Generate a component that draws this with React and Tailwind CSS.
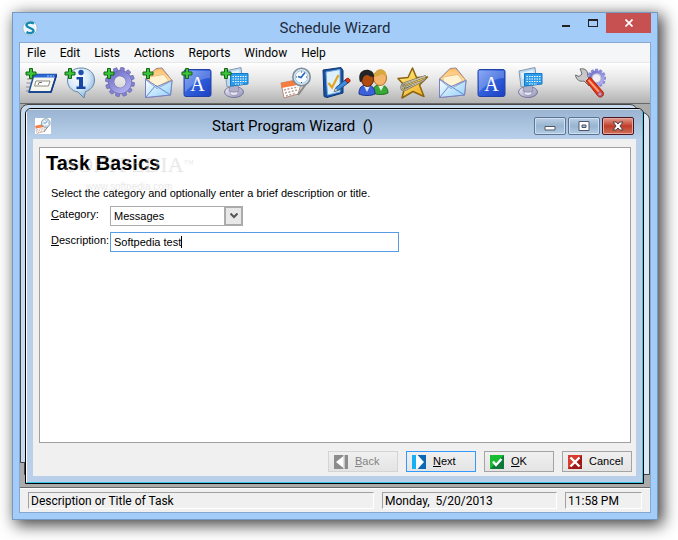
import { useState } from 'react';

const menus = ['File', 'Edit', 'Lists', 'Actions', 'Reports', 'Window', 'Help'];

// Gradients used by several of the toolbar drawings
function SharedGradients() {
  return (
    <svg className="absolute h-0 w-0" aria-hidden="true">
      <defs>
        <linearGradient id="blueTile" x1="0" y1="0" x2="1" y2="1">
          <stop offset="0" stopColor="#6f94f2" />
          <stop offset="0.5" stopColor="#2f5fdc" />
          <stop offset="1" stopColor="#1c3fc0" />
        </linearGradient>
        <linearGradient id="paper" x1="0" y1="0" x2="1" y2="1">
          <stop offset="0" stopColor="#ffffff" />
          <stop offset="1" stopColor="#8fd0fa" />
        </linearGradient>
        <linearGradient id="flap" x1="0" y1="0" x2="0" y2="1">
          <stop offset="0" stopColor="#ffc06a" />
          <stop offset="1" stopColor="#fff0cf" />
        </linearGradient>
        <linearGradient id="gear" x1="0" y1="0" x2="1" y2="1">
          <stop offset="0" stopColor="#6f6fc8" />
          <stop offset="1" stopColor="#b4b4f0" />
        </linearGradient>
        <radialGradient id="bubble" cx="0.4" cy="0.3" r="0.8">
          <stop offset="0" stopColor="#ffffff" />
          <stop offset="0.5" stopColor="#d5e8f8" />
          <stop offset="1" stopColor="#6fa5d4" />
        </radialGradient>
        <linearGradient id="gold" x1="0" y1="0" x2="1" y2="1">
          <stop offset="0" stopColor="#fff08a" />
          <stop offset="1" stopColor="#f0a818" />
        </linearGradient>
        <linearGradient id="steel" x1="0" y1="0" x2="1" y2="1">
          <stop offset="0" stopColor="#f4f4fa" />
          <stop offset="1" stopColor="#8c8cb4" />
        </linearGradient>
      </defs>
    </svg>
  );
}

function Plus() {
  return (
    <path
      d="M4.500 1.500h3v3.500h3.500v3h-3.500v3.500h-3v-3.500H1v-3h3.500z"
      fill="#3cc43c"
      stroke="#146414"
      strokeWidth="1"
    />
  );
}

function Form() {
  return (
    <>
      <path d="M2 12h5M1.500 16h5M1 20h4M1 24h3" stroke="#8a8a8a" />
      <path d="M9 7.500h22.500L26 25H4z" fill="#f6f6ee" stroke="#1c50a0" strokeWidth="1.500" />
      <path d="M9 7.500h22.500l-1 3H8z" fill="#2a66d8" />
      <path d="M22 9h7" stroke="#a8d0ff" strokeDasharray="2 1" />
      <path d="M11 14h14l-1.500 5H9.500z" fill="#fff" stroke="#8c8c80" />
      <path d="M13 18l1-2.500h3" stroke="#777" fill="none" />
      <path d="M4 25h22l5.500-17" stroke="#123c86" strokeWidth="1.500" fill="none" />
    </>
  );
}

function Info() {
  return (
    <>
      <path
        d="M17 1c8 0 13.500 5 13.500 12 0 6-4 10-9 11.500L20 31l-6-6C7 24 3.500 19 3.500 13 3.500 6 9 1 17 1z"
        fill="url(#bubble)"
        stroke="#6488aa"
      />
      <circle cx="17" cy="5.500" r="2.700" fill="#1c50b0" />
      <path d="M12.500 10h6.500v9.500h2.500V22h-9v-2.500H15v-7h-2.500z" fill="#1846a4" />
    </>
  );
}

const teeth = [0, 30, 60, 90, 120, 150, 180, 210, 240, 270, 300, 330];

function Cog() {
  return (
    <g transform="rotate(10 17 15)">
      {teeth.map((a) => (
        <path
          key={a}
          d="M14.500 5l.8-4.500h3.400l.8 4.500z"
          fill="#8484d4"
          stroke="#6464ac"
          strokeWidth="0.700"
          transform={`rotate(${a} 17 15)`}
        />
      ))}
      <circle cx="17" cy="15" r="8.700" fill="none" stroke="#6868b0" strokeWidth="6" />
      <circle cx="17" cy="15" r="8.700" fill="none" stroke="url(#gear)" strokeWidth="5" />
    </g>
  );
}

function Envelope() {
  return (
    <>
      <path d="M3.500 12L14 1.500 20 1l10 12.500L28.500 28 3.500 30.500z" fill="#e6f2fd" stroke="#7c80bc" />
      <path d="M4 12L14 2l5.500-.5L29.500 13 16 20z" fill="url(#flap)" stroke="#d09040" strokeWidth="0.700" />
      <path d="M7 10l15-2.500 4.500 6L16 20l-8.500-5z" fill="#fff3d4" stroke="#e0a458" strokeWidth="0.600" />
      <path d="M3.500 12L15 19.500 30 13.500 28.500 28 3.500 30.500z" fill="url(#paper)" stroke="#7c80bc" />
      <path d="M4 30l9.500-11.500L28.500 28" fill="none" stroke="#6888cc" />
      <path d="M4 13l11 8.500L29.500 14" fill="none" stroke="#88a8dc" />
    </>
  );
}

function Letter() {
  return (
    <>
      <rect x="3" y="2.500" width="27" height="27" rx="2" fill="url(#blueTile)" stroke="#2442a8" />
      <path d="M4 4h25v7C20 11 12 17 4 25z" fill="#fff" opacity="0.22" />
      <text x="16.500" y="24" textAnchor="middle" fontSize="20" fill="#fff" className="font-['Liberation_Serif',serif]">
        A
      </text>
    </>
  );
}

function Keyboard() {
  return (
    <>
      <ellipse cx="14" cy="25" rx="9.500" ry="5.500" fill="url(#steel)" stroke="#77779c" />
      <ellipse cx="14" cy="26" rx="4" ry="2.500" fill="#e8e8f4" stroke="#8c8cac" strokeWidth="0.700" />
      <path d="M10 18h8l1 6c-3 1.500-7 1.500-10 0z" fill="#b0b0c8" stroke="#8080a0" strokeWidth="0.700" />
      <path d="M5 4l16-3.500 2 17L7 20z" fill="#bcdcf2" stroke="#8898ac" />
      <path d="M7 6l12-3 1 4-12 5z" fill="#fff" opacity="0.6" />
      <path d="M10.500 6.500H28V17l-17.500 2z" fill="#2c9cec" stroke="#1878c4" />
      <path
        d="M12.500 9.500h14M12.500 12h14M12.500 14.500h14M15 17h8"
        stroke="#fff"
        strokeWidth="1.100"
        strokeDasharray="1.500 1"
      />
    </>
  );
}

function Schedule() {
  return (
    <>
      <path d="M1 16l16-3 5 1-4 13-14 4z" fill="#fff" stroke="#b48c78" />
      <path d="M1 16l16-3.500 4 1-.8 4L1.500 21z" fill="#f47c3c" />
      <path d="M4 23l14-3M5 26l12-3M6 29l9-2.500" stroke="#b49c94" strokeWidth="1.500" strokeDasharray="2 1.500" />
      <path d="M18 28l8-11" stroke="#888" strokeWidth="2" />
      <circle cx="21.500" cy="10" r="8.700" fill="#dce9f3" stroke="#7d8d99" strokeWidth="1.600" />
      <circle cx="21.500" cy="10" r="6.300" fill="#f6fbff" stroke="#a3c8e2" />
      <path d="M25 5.500l-4 5-3-1" stroke="#2464b4" strokeWidth="1.500" fill="none" />
      <path d="M21.500 4.500v1M21.500 15v1M16 10h1M26 10h1" stroke="#444" />
    </>
  );
}

function Checklist() {
  return (
    <>
      <path d="M4 3l18-2.500 2 3V26L8 30.500l-3-1z" fill="#1850a0" stroke="#0e3878" />
      <path d="M7 5l14-2.500V25L8.500 28z" fill="#dff0fd" stroke="#74a8dc" />
      <path d="M9.500 16l3.500 4.500L19.500 8" stroke="#e4a41c" strokeWidth="2.200" fill="none" />
      <path d="M15 24.500l2-4L26 13l3 3-10 7.500z" fill="#3c8cdc" stroke="#1c5090" />
      <path d="M26 13l2-1.500c2-1 4 2 2.500 3.500L29 16z" fill="#e03818" stroke="#88200c" />
      <path d="M15 24.500l1.500-3 2 1.800z" fill="#f4cc90" />
    </>
  );
}

function People() {
  return (
    <>
      <path d="M15 26c0-6 2-8 7-8s8 3 8 8c-4 2-11 2-15 0z" fill="#38a838" stroke="#1c701c" />
      <path d="M20 18l3 6 3-6z" fill="#e4f4e4" />
      <ellipse cx="22" cy="11" rx="6.500" ry="7.500" fill="#f4b46c" stroke="#ac7028" />
      <path d="M15.500 10c1-10 13-10 13-1-2 0-3-1-4-2-3 2-6 3-9 3z" fill="#d8a840" />
      <path d="M1 27c0-7 3-9 8-9s8 3 8 9c-4 2-12 2-16 0z" fill="#3c60d8" stroke="#1c3890" />
      <path d="M6 19l3 6 3-6z" fill="#dce6fc" />
      <ellipse cx="9.500" cy="12.500" rx="6" ry="7" fill="#b04c10" stroke="#542008" />
      <path d="M2 15C-1 6 5 1.500 11 3c4 1 5.500 4 5 7-3 0-5-1-6-2-3 0-4 1-5 3-.5 2-1 4-3 4z" fill="#242428" />
    </>
  );
}

function Star() {
  return (
    <>
      <path
        d="M15.500 1l4 9.500 11-.5-8 8 4.500 11.500-11-5L5 31l3-12L1 11.500l10-1z"
        fill="url(#gold)"
        stroke="#8c6410"
        strokeWidth="1.500"
        strokeLinejoin="round"
      />
      <path
        d="M29 9L8 16c-5 2-5 8 0 7l17-9c4-2 4-5 0-3.500L9 17c-3 1.500-2 3.500 0 3l13-5"
        fill="none"
        stroke="#746c50"
        strokeWidth="2"
      />
      <path
        d="M29 9L8 16c-5 2-5 8 0 7l17-9c4-2 4-5 0-3.500L9 17c-3 1.500-2 3.500 0 3l13-5"
        fill="none"
        stroke="#d0ccb4"
        strokeWidth="0.900"
      />
    </>
  );
}

function Tools() {
  return (
    <>
      <g transform="translate(11 1) scale(0.68)">
        {teeth.map((a) => (
          <path key={a} d="M14 6l1-5h4l1 5z" fill="#8c8cd8" transform={`rotate(${a} 17 15)`} />
        ))}
        <circle cx="17" cy="15" r="9" fill="none" stroke="url(#gear)" strokeWidth="4" />
        <circle cx="17" cy="15" r="6.500" fill="#f0f0f4" stroke="#9898c4" />
      </g>
      <path
        d="M6 2c4-1 7 1 7.500 4l.5 4 5 5-4 4-5-5c-4 1-8-1-8.500-6l3.500 1.500 3-2.500L7 4z"
        fill="#c8c8cc"
        stroke="#6c6c6c"
      />
      <path d="M12 14l4-4 13 15c2 3-2 7-5 4z" fill="#e83010" stroke="#a42c18" />
      <path d="M14.500 13L26 26" stroke="#ffa07c" strokeWidth="2" />
      <circle cx="26" cy="27" r="2.200" fill="#d890a8" stroke="#a04860" />
    </>
  );
}

const toolGroups = [
  {
    className: 'flex gap-[7px]',
    tools: [
      { label: 'New program', Icon: Form, add: true },
      { label: 'New reminder', Icon: Info, add: true },
      { label: 'New service', Icon: Cog, add: true },
      { label: 'New email', Icon: Envelope, add: true },
      { label: 'New text', Icon: Letter, add: true },
      { label: 'New keystrokes', Icon: Keyboard, add: true },
    ],
  },
  {
    className: 'ml-7 flex gap-[7px]',
    tools: [
      { label: 'Schedule', Icon: Schedule },
      { label: 'Tasks', Icon: Checklist },
      { label: 'Users', Icon: People },
      { label: 'Attachments', Icon: Star },
      { label: 'Emails', Icon: Envelope },
      { label: 'Texts', Icon: Letter },
      { label: 'Keystrokes', Icon: Keyboard },
    ],
  },
  { className: 'ml-7 flex', tools: [{ label: 'Options', Icon: Tools }] },
];

function Toolbar() {
  return (
    <div className="flex border-b border-[#696969] bg-linear-to-b from-white via-[#e2e2e2] to-[#b2b2b2] px-[5px] pt-1 pb-1">
      {toolGroups.map(({ className, tools }, i) => (
        <div key={i} className={className}>
          {tools.map(({ label, Icon, add }) => (
            <button key={label} type="button" aria-label={label} className="size-8">
              <svg viewBox="0 0 32 32" className="size-8">
                <Icon />
                {add && <Plus />}
              </svg>
            </button>
          ))}
        </div>
      ))}
    </div>
  );
}

function TitleBar() {
  return (
    <header className="grid h-[29px] grid-cols-[1fr_auto_1fr] text-[#1e2a3a]">
      <div className="flex items-center pl-[9px]">
        <svg viewBox="0 0 16 16" className="size-4">
          <circle cx="8" cy="8" r="7.200" fill="#eef8fc" stroke="#a4bccb" />
          <path
            d="M12 3.500C8 1.500 4 3 4.500 5.500 5 8 11 8 11.500 10.500c.3 2.500-4 3.500-7 1.500"
            fill="none"
            stroke="#1488b4"
            strokeWidth="2.400"
          />
        </svg>
      </div>
      <h1 className="self-center font-[Roboto,sans-serif] text-[15px] leading-5">Schedule Wizard</h1>
      <div className="flex items-start justify-end pr-[6px]">
        <button type="button" aria-label="Minimize" className="flex h-5 w-7 items-center justify-center">
          <svg viewBox="0 0 12 12" className="size-3">
            <path d="M2 8h8v2H2z" fill="#222" />
          </svg>
        </button>
        <button type="button" aria-label="Maximize" className="flex h-5 w-[26px] items-center justify-center">
          <svg viewBox="0 0 12 12" className="size-3">
            <path d="M1 2h10v8H1zM2 4v5h8V4z" fillRule="evenodd" fill="#222" />
          </svg>
        </button>
        <button type="button" aria-label="Close" className="flex h-5 w-[45px] items-center justify-center bg-[#c75050]">
          <svg viewBox="0 0 8 8" className="size-2">
            <path d="M0.500 0.500l7 7M7.500 0.500l-7 7" stroke="#fff" strokeWidth="1.700" />
          </svg>
        </button>
      </div>
    </header>
  );
}

function FrameButton({ label, danger, children }) {
  return (
    <button
      type="button"
      aria-label={label}
      className={
        danger
          ? 'flex h-[18px] w-8 items-center justify-center rounded-xs border border-[#4c1420] bg-linear-to-b from-[#e09c90] via-[#c03c28] to-[#cc7058] inset-ring inset-ring-[#e4a8a0]'
          : 'flex h-[18px] w-8 items-center justify-center rounded-xs border border-[#5c7494] bg-linear-to-b from-[#bcd0e6] via-[#98b4d0] to-[#b4cce6] inset-ring inset-ring-[#cfdff0]'
      }
    >
      <svg viewBox="0 0 12 10" className="h-[10px] w-3">
        {children}
      </svg>
    </button>
  );
}

function WizardTitle() {
  return (
    <div className="flex h-[29px] items-center bg-linear-to-b from-[#9ab4d2] to-[#b8d0ea] pt-[3px] pr-[8px] pl-[8px]">
      <span className="flex size-4 bg-white">
        <svg viewBox="0 0 32 32" className="size-4">
          <Schedule />
        </svg>
      </span>
      <h2 className="flex-1 text-center font-[Roboto,sans-serif] text-[15px] leading-5 whitespace-pre text-black">
        {'Start Program Wizard  ()'}
      </h2>
      <div className="flex gap-[2px]">
        <FrameButton label="Minimize wizard">
          <path d="M1 5.500h10v3.500H1z" fill="#fff" stroke="#505868" />
        </FrameButton>
        <FrameButton label="Maximize wizard">
          <path d="M1 0.500h10v9H1zM4 4v2.500h4V4z" fillRule="evenodd" fill="#fff" stroke="#505868" />
        </FrameButton>
        <FrameButton label="Close wizard" danger>
          <path
            d="M1 1h3.200L6 3l1.800-2H11L8 5l3 4H7.800L6 7 4.200 9H1l3-4z"
            fill="#fff"
            stroke="#503c44"
          />
        </FrameButton>
      </div>
    </div>
  );
}

// Faint embossed mark lying over the page heading
function Watermark() {
  return (
    <div
      aria-hidden="true"
      className="pointer-events-none absolute top-0 left-6 text-center font-['Liberation_Serif',serif] text-white/30 text-shadow-[1px_1px_1px_rgb(0_0_0/0.12)]"
    >
      <p className="text-[22px] leading-8">
        SOFTPEDIA<sup className="text-[10px]">™</sup>
      </p>
      <p className="font-['Liberation_Sans',sans-serif] text-[10px] leading-3">www.softpedia.com</p>
    </div>
  );
}

function WizardPage() {
  const [category, setCategory] = useState('Messages');
  const [description, setDescription] = useState('Softpedia test');

  return (
    <section className="relative mr-px flex-1 border border-[#a0a0a0] bg-white">
      <h3 className="px-[6px] pt-[5px] text-[20px] leading-5 font-bold">Task Basics</h3>
      <p className="mt-2 px-[11px] pt-1 pb-[2px] leading-4">
        Select the category and optionally enter a brief description or title.
      </p>
      <div className="mt-[3px] grid grid-cols-[59px_1fr] gap-y-[6px] pl-[11px]">
        <label htmlFor="category" className="leading-4">
          <u>C</u>ategory:
        </label>
        <div className="relative h-5 w-[133px]">
          <select
            id="category"
            value={category}
            onChange={(e) => setCategory(e.target.value)}
            className="h-5 w-full appearance-none border border-[#ababab] bg-white pl-[3px] outline-none"
          >
            <option>Messages</option>
            <option>Programs</option>
            <option>Reminders</option>
          </select>
          <span className="pointer-events-none absolute top-0 right-0 flex h-5 w-[19px] items-center justify-center border-2 border-[#ababab] bg-[#e8e8e8]">
            <svg viewBox="0 0 8 6" className="h-[6px] w-2">
              <path d="M0.500 0.500L4 4l3.500-3.500" fill="none" stroke="#555" strokeWidth="2" />
            </svg>
          </span>
        </div>
        <label htmlFor="description" className="leading-4">
          <u>D</u>escription:
        </label>
        <div className="relative w-[289px]">
          <input
            id="description"
            type="text"
            value={description}
            onChange={(e) => setDescription(e.target.value)}
            className="block h-5 w-full border border-[#569de5] bg-white px-[3px] caret-transparent outline-none"
          />
          {/* Steady caret behind the last character */}
          <span aria-hidden="true" className="pointer-events-none absolute inset-y-1 left-1 flex">
            <span className="invisible">{description}</span>
            <span className="w-px bg-black" />
          </span>
        </div>
      </div>
      <Watermark />
    </section>
  );
}

const buttonBase =
  'flex h-[21px] w-[70px] items-center gap-[7px] border bg-linear-to-b from-[#f0f0f0] to-[#e4e4e4] pl-[5px]';

function WizardButtons() {
  return (
    <div className="flex justify-end gap-2">
      <button type="button" disabled className={`${buttonBase} border-[#d4d4d4] text-[#838383]`}>
        <svg viewBox="0 0 14 14" className="size-[14px]">
          <path d="M0 0h14v14H0z" fill="#8c8c8c" />
          <path d="M9.500 1v12L2 7z" fill="#fff" />
          <path d="M9.500 0h1v14h-1z" fill="#fff" />
        </svg>
        <span><u>B</u>ack</span>
      </button>
      <button type="button" className={`${buttonBase} border-[#3399ff]`}>
        <svg viewBox="0 0 14 14" className="size-[14px]">
          <path d="M0 0h14v14H0z" fill="#0c68b4" />
          <path d="M0 0h4v14H0z" fill="#18b0f4" />
          <path d="M4 0h1.500L12 7l-6.500 7H4z" fill="#fff" />
        </svg>
        <span><u>N</u>ext</span>
      </button>
      <button type="button" className={`${buttonBase} border-[#a4a4a4]`}>
        <svg viewBox="0 0 14 14" className="size-[14px]">
          <path d="M0 0h14v14H0z" fill="#0e7838" />
          <path d="M0 0h14L0 14z" fill="#18bc30" />
          <path d="M3 6.500L6 10l5.500-6" fill="none" stroke="#fff" strokeWidth="2.400" />
        </svg>
        <span><u>O</u>K</span>
      </button>
      <button type="button" className={`${buttonBase} border-[#a4a4a4]`}>
        <svg viewBox="0 0 14 14" className="size-[14px]">
          <path d="M0 0h14v14H0z" fill="#a01818" />
          <path d="M0 0h14L0 14z" fill="#d83c30" />
          <path d="M2.500 2.500l9 9M11.500 2.500l-9 9" stroke="#fff" strokeWidth="2.400" />
        </svg>
        <span>Cancel</span>
      </button>
    </div>
  );
}

function StatusBar() {
  return (
    <footer className="flex h-6 gap-2 border-t border-white bg-[#f0f0f0] px-2 py-[3px] font-[Roboto,sans-serif] text-[12px] leading-4">
      <span className="flex-1 border-t border-r border-b border-l border-t-[#a0a0a0] border-r-white border-b-white border-l-[#a0a0a0] pl-[2px]">
        Description or Title of Task
      </span>
      <span className="w-[175px] border-t border-r border-b border-l border-t-[#a0a0a0] border-r-white border-b-white border-l-[#a0a0a0] pl-[2px] whitespace-pre">
        {'Monday,  5/20/2013'}
      </span>
      <span className="w-[77px] border-t border-r border-b border-l border-t-[#a0a0a0] border-r-white border-b-white border-l-[#a0a0a0] pl-[2px]">
        11:58 PM
      </span>
    </footer>
  );
}

export default function App() {
  return (
    <div className="flex min-h-screen flex-col bg-white pt-3 pr-5 pb-5 pl-3 text-black">
      <SharedGradients />
      <div className="flex flex-1 flex-col border border-[#7799c0] bg-[#a4ccf8] shadow-[4px_4px_15px_1px_rgb(0_0_0/0.75)]">
        <TitleBar />
        <div className="mx-[6px] mb-[6px] flex flex-1 flex-col border border-[#86a8d0]">
          <nav className="flex h-5 items-center border-b border-[#e6e8ea] bg-[#f5f6f7]">
            {menus.map((name) => (
              <button
                key={name}
                type="button"
                className="px-[7px] font-[Roboto,sans-serif] text-[12px] leading-4"
              >
                {name}
              </button>
            ))}
          </nav>
          <Toolbar />
          <main className="relative flex flex-1 flex-col border-b border-[#696969] bg-[#ababab] pt-1 pr-[6px] pb-[3px] pl-[5px]">
            {/* Windows stacked behind the wizard */}
            <div className="absolute top-2 right-0 bottom-3 left-1 rounded-tr-lg border border-[#444] bg-[#dce8f6]" />
            <div className="absolute top-0 right-3 bottom-6 left-0 rounded-t-lg border border-[#444] bg-[#c8daee]" />
            <div className="relative flex flex-1 flex-col overflow-hidden rounded-t-md border border-black bg-[#bad0ea] font-['Liberation_Sans',sans-serif] text-[11px]">
              <div className="flex flex-1 flex-col border border-t-[#d8e6f4] border-r-[#38c8e8] border-b-[#38c8e8] border-l-white">
                <WizardTitle />
                <div className="mx-[6px] mb-[6px] flex flex-1 flex-col gap-2 bg-[#f0f0f0] pt-2 pr-1 pb-1 pl-[6px]">
                  <WizardPage />
                  <WizardButtons />
                </div>
              </div>
            </div>
          </main>
          <StatusBar />
        </div>
      </div>
    </div>
  );
}
